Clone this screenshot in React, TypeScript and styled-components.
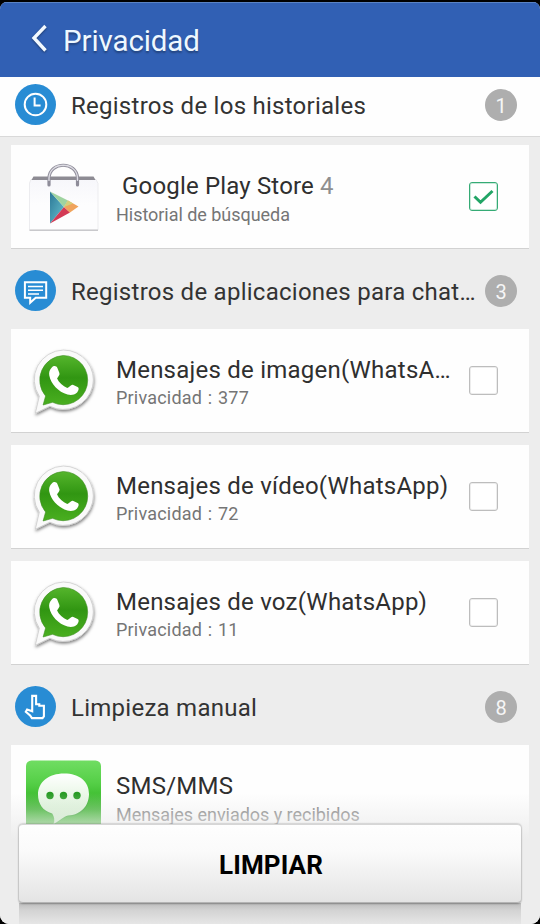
import React from 'react';
import styled, { createGlobalStyle } from 'styled-components';

const GlobalStyle = createGlobalStyle`
  * { box-sizing: border-box; }
  body { margin: 0; background: #000; font-family: Roboto, "Liberation Sans", sans-serif; }
`;

const Screen = styled.div`
  width: 540px;
  height: 924px;
  padding-top: 2px;
  background: #000;
  overflow: hidden;
`;

const Surface = styled.div`
  position: relative;
  display: flex;
  flex-direction: column;
  height: 922px;
  border-radius: 7px 7px 9px 9px;
  background: #ededed;
  overflow: hidden;
`;

const TitleBar = styled.header`
  flex: none;
  display: flex;
  align-items: center;
  gap: 13px;
  height: 75px;
  padding-left: 30px;
  padding-bottom: 1px;
  background: #3160b4;
  border-top: 1px solid #5a83c4;
`;

const BackIcon = styled.svg`
  width: 20px;
  height: 30px;
  margin-top: -3px;
  filter: drop-shadow(0 1px 1px rgba(0, 0, 0, 0.4));
`;

const PageTitle = styled.h1`
  margin: 3px 0 0;
  color: #eef8ff;
  font-size: 29.5px;
  font-weight: 400;
  line-height: 36px;
  letter-spacing: -0.1px;
  text-shadow: 0 2px 2px rgba(0, 0, 0, 0.3);
`;

const SectionBar = styled.div<{ $pinned?: boolean }>`
  flex: none;
  display: flex;
  align-items: center;
  height: ${p => (p.$pinned ? 60 : 80)}px;
  padding: ${p => (p.$pinned ? '0 23px 4px 15px' : '3px 23px 0 15px')};
  margin-bottom: ${p => (p.$pinned ? 8 : 0)}px;
  background: ${p => (p.$pinned ? '#fefefe' : 'transparent')};
  border-bottom: ${p => (p.$pinned ? '1px solid #d9d9d9' : 'none')};
`;

const SectionIcon = styled.svg`
  flex: none;
  width: 41px;
  height: 41px;
  margin-right: 15px;
`;

const SectionTitle = styled.h2`
  flex: 1;
  margin: 3px 0 0;
  color: #333;
  font-size: 24px;
  font-weight: 400;
  line-height: 30px;
  letter-spacing: 0.26px;
  white-space: nowrap;
`;

const Badge = styled.span`
  flex: none;
  display: flex;
  align-items: center;
  justify-content: center;
  width: 32px;
  height: 32px;
  padding-top: 2px;
  border-radius: 50%;
  background: #aeaeae;
  color: #f6f6f6;
  font-size: 20px;
`;

const CardList = styled.div`
  flex: none;
  display: flex;
  flex-direction: column;
  gap: 12px;
  padding: 0 11px;
`;

const Card = styled.div`
  display: flex;
  align-items: center;
  height: 104px;
  padding-right: 31px;
  background: #fefefe;
  border-bottom: 1px solid #d2d2d2;
`;

const AppIcon = styled.svg`
  flex: none;
  width: 105px;
  height: 103px;
`;

const CardText = styled.div`
  flex: 1;
  min-width: 0;
  align-self: flex-start;
  padding-top: 27px;
`;

const CardTitle = styled.div<{ $spacing?: number; $indent?: number }>`
  padding-left: ${p => p.$indent ?? 0}px;
  color: #2f2f2f;
  font-size: 24px;
  line-height: 28px;
  letter-spacing: ${p => p.$spacing ?? 0.23}px;
  white-space: nowrap;
`;

const Count = styled.span`
  color: #8f8f8f;
`;

const CardDetail = styled.div<{ $counted?: boolean }>`
  margin-top: ${p => (p.$counted ? 1 : 2)}px;
  color: #757575;
  font-size: 18px;
  line-height: 26px;
  letter-spacing: ${p => (p.$counted ? 0.2 : -0.04)}px;
  word-spacing: ${p => (p.$counted ? 1 : 0)}px;
  white-space: nowrap;
`;

const CheckBox = styled.span<{ $checked: boolean }>`
  flex: none;
  display: flex;
  width: 29px;
  height: 29px;
  border: 1px solid ${p => (p.$checked ? '#35ab75' : '#bdbdbd')};
  box-shadow: inset 0 0 0 1px ${p => (p.$checked ? '#35ab7544' : '#bdbdbd44')};
  border-radius: 3px;
  background: #fff;
`;

const Footer = styled.div`
  position: absolute;
  left: 0;
  right: 0;
  bottom: 0;
  height: 131px;
  padding: 31px 19px 0;
  background: linear-gradient(rgba(237, 237, 237, 0), rgba(237, 237, 237, 0.65) 31px, #ededed 46px);
`;

const CleanButton = styled.button`
  position: relative;
  display: block;
  width: 502px;
  height: 79px;
  border: 0;
  border-top: 1px solid #d6d6d6;
  border-bottom: 1px solid #b4b4b4;
  border-radius: 4px;
  padding: 2px 0 0 2px;
  background: linear-gradient(#fefefe, #fafafa 35%, #e4e4e4);
  box-shadow: 0 0 2px rgba(0, 0, 0, 0.4), 0 1px 2px rgba(0, 0, 0, 0.2);
  color: #000;
  font-family: Roboto, "Liberation Sans", sans-serif;
  font-size: 26px;
  font-weight: 700;
  letter-spacing: 0.1px;
`;

const FooterShade = styled.div`
  height: 21px;
  background: linear-gradient(#bdbdbd, #d3d3d3 35%, #e6e6e6);
`;

type SectionKind = 'history' | 'chat' | 'manual';

function SectionGlyph({ kind }: { kind: SectionKind }) {
  return (
    <SectionIcon viewBox="0 0 41 41" fill="none" stroke="#fff" strokeWidth="2">
      <circle cx="20.5" cy="20.5" r="20.5" fill="#288cd4" stroke="none" />
      {kind === 'history' && (
        <>
          <circle cx="20.5" cy="20.5" r="10.8" />
          <path d="M19.6 13.5v8h6" />
        </>
      )}
      {kind === 'chat' && (
        <>
          <path d="M9.9 12.3h21.3v15.4H20.7l-5.5 5v-5H9.9z" />
          <path d="M13 16.5h15M13 20.2h15M13 24h11" strokeWidth="1.5" />
        </>
      )}
      {kind === 'manual' && (
        <path
          d="M17.2 9.9h3.9v8.300h3.200v1.500h4.600v10.600l-1.400 1.800H16.900l-1.800-2.700-4.300-3.700 1.300-2.200 5.100 1.800z"
          strokeWidth="2.1"
        />
      )}
    </SectionIcon>
  );
}

function StoreIcon() {
  return (
    <AppIcon viewBox="0 0 105 103" fill="none">
      <defs>
        <linearGradient id="bag" x1="0" y1="0" x2="0" y2="1">
          <stop offset="0" stopColor="#f7f7fb" />
          <stop offset="0.5" stopColor="#fdfdfe" />
        </linearGradient>
        <linearGradient id="blue" x1="0" y1="0" x2="1" y2="1">
          <stop offset="0" stopColor="#2c7897" />
          <stop offset="1" stopColor="#68c2cf" />
        </linearGradient>
      </defs>
      <path d="M20 34.5h65l2 4v46.500H18.500V38z" fill="url(#bag)" stroke="#ececef" />
      <path d="M22.500 31.500h60l2 3.500H20.500z" fill="#8d8b93" />
      <path d="M18.500 85.300h68.500" stroke="#c9c9cc" strokeWidth="1.500" />
      <path d="M38 40V33C38.500 16 66 16 66.500 33v7" stroke="#8e8c99" strokeWidth="3.200" strokeLinecap="round" />
      <path d="M38 36V33C38.500 16 66 16 66.500 33v3" stroke="#dcdbe2" strokeWidth="1.300" />
      <path d="M39 46.500l14 15.500-14 16.500z" fill="url(#blue)" />
      <path d="M39 46.500l18 9-4 6.500z" fill="#9fd3a0" />
      <path d="M39 78.500l14-16.500 6 5.500z" fill="#d33a55" />
      <path d="M53 62l4-6.500 10.500 6-8.500 6z" fill="#f0a35c" />
      <path d="M53 62l4-6.500 5 3z" fill="#d3cf7a" />
    </AppIcon>
  );
}

function WhatsAppIcon() {
  return (
    <AppIcon viewBox="0 0 105 103" fill="none">
      <defs>
        <linearGradient id="wa" x1="0" y1="0" x2="0" y2="1">
          <stop offset="0" stopColor="#55b52c" />
          <stop offset="0.45" stopColor="#319612" />
          <stop offset="1" stopColor="#4aaf20" />
        </linearGradient>
        <filter id="waShadow" x="-20%" y="-20%" width="140%" height="150%">
          <feDropShadow dx="0.500" dy="1.800" stdDeviation="1.500" floodColor="#000" floodOpacity="0.5" />
        </filter>
      </defs>
      <g transform="translate(-0.700 -0.500)">
        <path
          d="M53 21.500a30 29.700 0 1 1-13.500 56.200L25 84.800l4-17.100A30 29.700 0 0 1 53 21.500z"
          fill="#fafafa"
          stroke="#c7c7c7"
          strokeWidth="0.700"
          strokeLinejoin="round"
          filter="url(#waShadow)"
        />
        <path
          d="M53 27a24.600 24.600 0 1 1-10.800 46.800L32.800 76.500l2.500-9A24.600 24.600 0 0 1 53 27z"
          fill="url(#wa)"
          stroke="#3c8d20"
          strokeWidth="0.600"
        />
        <path
          d="M41.500 39c2-2.200 4.600-1.800 5.600.5l2 5c.8 2-1.500 3.800-2.300 5.500 1.800 4.200 5.700 7.600 10.200 9.500 2-.5 3.500-3.500 5.500-3.200l4.800 2.200c2 1 .8 4.200-.8 5.800-2.400 2.300-6 2.600-9.300 1.800C48 63.300 40.600 55.500 39 47c-.6-3.300.4-6 2.500-8z"
          fill="#fff"
        />
      </g>
    </AppIcon>
  );
}

function SmsIcon() {
  return (
    <AppIcon viewBox="0 0 105 103" fill="none">
      <defs>
        <linearGradient id="sms" x1="0" y1="0" x2="0" y2="1">
          <stop offset="0" stopColor="#70dd62" />
          <stop offset="0.300" stopColor="#55cf47" />
          <stop offset="0.650" stopColor="#2aad1c" />
          <stop offset="0.900" stopColor="#3cb52e" />
        </linearGradient>
        <linearGradient id="bubble" x1="0" y1="0" x2="0" y2="1">
          <stop offset="0" stopColor="#fff" />
          <stop offset="0.500" stopColor="#e6f6e3" />
          <stop offset="1" stopColor="#c2e9bd" />
        </linearGradient>
      </defs>
      <rect x="15" y="15.500" width="75" height="75" rx="5.500" fill="url(#sms)" />
      <path
        d="M53 30c15.500 0 25 8 25 20s-7 21.500-21 21.500c-4.500 1-7.500 5-14.500 8.500 1.500-4 .7-7-.8-10C32 66.500 27 59 27 50.500 27 38 38 30 53 30z"
        fill="#16851a"
        opacity="0.350"
      />
      <path
        d="M53 28.500c15.500 0 25 8 25 20.500s-9 21-21 21.500c-4.500 1-7.500 5-14.500 8.500 1.500-4 .7-7-1.300-10.500C32 66 27 59 27 49.500 27 37 38 28.500 53 28.500z"
        fill="url(#bubble)"
      />
      <circle cx="39" cy="50.500" r="3.700" fill="#279b24" />
      <circle cx="52.500" cy="50.500" r="3.700" fill="#279b24" />
      <circle cx="66" cy="50.500" r="3.700" fill="#279b24" />
    </AppIcon>
  );
}

function Check({ checked = false }: { checked?: boolean }) {
  return (
    <CheckBox $checked={checked}>
      {checked && (
        <svg width="27" height="27" viewBox="0 0 27 27" fill="none" stroke="#22a566" strokeWidth="3">
          <path d="M4.500 13.500l6 5.800L22.500 8" />
        </svg>
      )}
    </CheckBox>
  );
}

const chats = [
  { title: 'Mensajes de imagen(WhatsA…', count: 377 },
  { title: 'Mensajes de vídeo(WhatsApp)', count: 72 },
  { title: 'Mensajes de voz(WhatsApp)', count: 11 },
];

export default function App() {
  return (
    <>
      <GlobalStyle />
      <Screen>
        <Surface>
          <TitleBar>
            <BackIcon viewBox="0 0 20 30" fill="none" stroke="#f2f9ff" strokeWidth="3.400">
              <path d="M15.500 3L4 15 15.500 27.500" />
            </BackIcon>
            <PageTitle>Privacidad</PageTitle>
          </TitleBar>

          <SectionBar $pinned>
            <SectionGlyph kind="history" />
            <SectionTitle>Registros de los historiales</SectionTitle>
            <Badge>1</Badge>
          </SectionBar>
          <CardList>
            <Card>
              <StoreIcon />
              <CardText>
                <CardTitle $spacing={0.17} $indent={6}>
                  Google Play Store <Count>4</Count>
                </CardTitle>
                <CardDetail>Historial de búsqueda</CardDetail>
              </CardText>
              <Check checked />
            </Card>
          </CardList>

          <SectionBar>
            <SectionGlyph kind="chat" />
            <SectionTitle>Registros de aplicaciones para chat…</SectionTitle>
            <Badge>3</Badge>
          </SectionBar>
          <CardList>
            {chats.map(chat => (
              <Card key={chat.title}>
                <WhatsAppIcon />
                <CardText>
                  <CardTitle>{chat.title}</CardTitle>
                  <CardDetail $counted>Privacidad : {chat.count}</CardDetail>
                </CardText>
                <Check />
              </Card>
            ))}
          </CardList>

          <SectionBar>
            <SectionGlyph kind="manual" />
            <SectionTitle>Limpieza manual</SectionTitle>
            <Badge>8</Badge>
          </SectionBar>
          <CardList>
            <Card>
              <SmsIcon />
              <CardText>
                <CardTitle>SMS/MMS</CardTitle>
                <CardDetail>Mensajes enviados y recibidos</CardDetail>
              </CardText>
            </Card>
          </CardList>

          <Footer>
            <CleanButton>LIMPIAR</CleanButton>
            <FooterShade />
          </Footer>
        </Surface>
      </Screen>
    </>
  );
}
